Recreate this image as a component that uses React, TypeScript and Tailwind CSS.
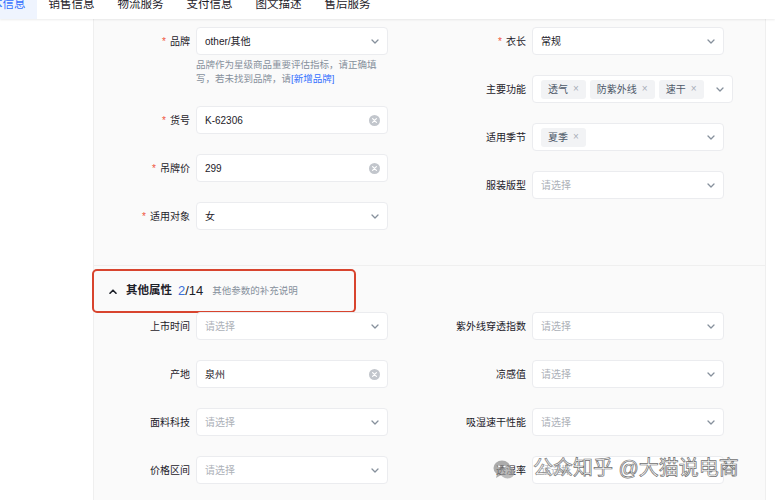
import type { ReactNode } from 'react';

const font = 'font-["Helvetica_Neue","Liberation_Sans","Noto_Sans_CJK_SC",sans-serif]';

function Chevron({ up = false }: { up?: boolean }) {
  if (up) {
    return (
      <svg width="8" height="5" viewBox="0 0 8 5" className="shrink-0">
        <path d="M1 4.2 L4 1.2 L7 4.2" fill="none" stroke="#1d2129" strokeWidth="1.6" strokeLinecap="round" strokeLinejoin="round" />
      </svg>
    );
  }
  return (
    <svg width="8" height="5" viewBox="0 0 8 5" className="shrink-0">
      <path d="M1 1 L4 4 L7 1" fill="none" stroke="#86909c" strokeWidth="1.3" strokeLinecap="round" strokeLinejoin="round" />
    </svg>
  );
}

function ClearIcon() {
  return (
    <svg width="11" height="11" viewBox="0 0 11 11" className="shrink-0">
      <circle cx="5.5" cy="5.5" r="5.5" fill="#c2c6cc" />
      <path d="M3.6 3.6 L7.4 7.4 M7.4 3.6 L3.6 7.4" stroke="#fff" strokeWidth="1.2" strokeLinecap="round" />
    </svg>
  );
}

function Tag({ text }: { text: string }) {
  return (
    <span className="flex h-[19px] items-center gap-[5px] rounded-[3px] bg-[#f2f3f5] px-[7px] text-[10px] text-[#4e5969]">
      {text}
      <span className="text-[10px] leading-none text-[#a9aeb8]">×</span>
    </span>
  );
}

function Field({
  label,
  required = false,
  wide = false,
  children,
}: {
  label: string;
  required?: boolean;
  wide?: boolean;
  children: ReactNode;
}) {
  return (
    <div className="flex items-center">
      <div
        className={`${wide ? 'w-[144px]' : 'w-[102px]'} flex shrink-0 items-center justify-end gap-[4px] pr-[6px] text-[10px] text-[#1d2129]`}
      >
        {required && <span className="text-[10px] text-[#f0553c]">*</span>}
        {label}
      </div>
      {children}
    </div>
  );
}

function Select({ value, w = 'w-[192px]' }: { value?: string; w?: string }) {
  return (
    <div
      className={`${w} flex h-[28px] items-center justify-between rounded-[4px] border border-[#ebecef] bg-white pl-[8px] pr-[8px] text-[10px]`}
    >
      <span className={value ? 'text-[#1d2129]' : 'text-[#adb1b8]'}>{value ?? '请选择'}</span>
      <Chevron />
    </div>
  );
}

function Input({ value }: { value: string }) {
  return (
    <div className="flex h-[28px] w-[192px] items-center justify-between rounded-[4px] border border-[#ebecef] bg-white pl-[8px] pr-[7px] text-[10px] text-[#1d2129]">
      <span>{value}</span>
      <ClearIcon />
    </div>
  );
}

function TagSelect({ tags, w }: { tags: string[]; w: string }) {
  return (
    <div
      className={`${w} flex h-[28px] items-center rounded-[4px] border border-[#ebecef] bg-white pl-[8px] pr-[8px]`}
    >
      <div className="flex flex-1 items-center gap-[4px]">
        {tags.map((t) => (
          <Tag key={t} text={t} />
        ))}
      </div>
      <Chevron />
    </div>
  );
}

const tabs = ['基本信息', '销售信息', '物流服务', '支付信息', '图文描述', '售后服务'];

export default function App() {
  return (
    <div className={`relative h-[500px] w-[775px] overflow-hidden bg-white ${font}`}>
      {/* tab bar */}
      <div className="relative z-10 flex h-[19px] overflow-hidden bg-white shadow-[0_1px_2px_rgba(0,0,0,0.08)]">
        <div className="ml-[-32px] flex">
          {tabs.map((t, i) => (
            <div
              key={t}
              className={`flex h-[19px] items-start px-[11.5px] text-[11.5px] leading-[12px] ${
                i === 0 ? 'bg-[#eff4fe] text-[#3370ff]' : 'text-[#1d2129]'
              }`}
            >
              <span className="mt-[-2px]">{t}</span>
            </div>
          ))}
        </div>
      </div>

      <div className="flex">
        <div className="w-[93px] shrink-0" />
        <div className="h-[481px] w-[673px] border-x border-[#efefef] bg-[#fafafa]">
          {/* basic attributes */}
          <div className="flex h-[247px] border-b border-[#efefef]">
            <div className="flex flex-col gap-[20px] pt-[8px]">
              <div>
                <Field label="品牌" required>
                  <Select value="other/其他" />
                </Field>
                <div className="ml-[102px] mt-[3px] whitespace-nowrap text-[9.5px] leading-[14px] text-[#86909c]">
                  品牌作为星级商品重要评估指标，请正确填
                  <br />
                  写，若未找到品牌，请<span className="text-[#3370ff]">[新增品牌]</span>
                </div>
              </div>
              <Field label="货号" required>
                <Input value="K-62306" />
              </Field>
              <Field label="吊牌价" required>
                <Input value="299" />
              </Field>
              <Field label="适用对象" required>
                <Select value="女" />
              </Field>
            </div>
            <div className="flex flex-col gap-[20px] pt-[8px]">
              <Field label="衣长" required wide>
                <Select value="常规" />
              </Field>
              <Field label="主要功能" wide>
                <TagSelect tags={['透气', '防紫外线', '速干']} w="w-[201px]" />
              </Field>
              <Field label="适用季节" wide>
                <TagSelect tags={['夏季']} w="w-[192px]" />
              </Field>
              <Field label="服装版型" wide>
                <Select />
              </Field>
            </div>
          </div>

          {/* other attributes */}
          <div className="ml-[-2px] mt-[3px] flex h-[44px] w-[264px] items-center rounded-[5px] border-2 border-[#d8442e] pl-[15px]">
            <Chevron up />
            <span className="ml-[9px] text-[11.5px] font-semibold text-[#1d2129]">其他属性</span>
            <span className="ml-[6px] text-[13px] text-[#1d2129]">
              <span className="text-[#3b6fd8]">2</span>/14
            </span>
            <span className="ml-[9px] text-[9.5px] text-[#86909c]">其他参数的补充说明</span>
          </div>
          <div className="mt-[-1px] flex">
            <div className="flex flex-col gap-[20px]">
              <Field label="上市时间">
                <Select />
              </Field>
              <Field label="产地">
                <Input value="泉州" />
              </Field>
              <Field label="面料科技">
                <Select />
              </Field>
              <Field label="价格区间">
                <Select />
              </Field>
            </div>
            <div className="flex flex-col gap-[20px]">
              <Field label="紫外线穿透指数" wide>
                <Select />
              </Field>
              <Field label="凉感值" wide>
                <Select />
              </Field>
              <Field label="吸湿速干性能" wide>
                <Select />
              </Field>
              <Field label="透湿率" wide>
                <Select />
              </Field>
            </div>
          </div>
        </div>
      </div>

      {/* watermark */}
      <div className="pointer-events-none absolute left-[493px] top-[459px] flex items-center">
        <svg width="22" height="22" viewBox="0 0 22 22" className="opacity-70">
          <ellipse cx="9" cy="9" rx="8.5" ry="7.5" fill="#8a8a8a" />
          <path d="M4 15 L3 19 L8 16 Z" fill="#8a8a8a" />
          <ellipse cx="14.5" cy="13.5" rx="7" ry="6" fill="#a0a0a0" />
          <circle cx="6" cy="7.5" r="1.1" fill="#fff" />
          <circle cx="11.5" cy="7.5" r="1.1" fill="#fff" />
        </svg>
      </div>
      <div className="pointer-events-none absolute left-[533px] top-[456px] text-[20px] leading-[24px] text-white/80 [-webkit-text-stroke:0.7px_#808080]">
        公众
      </div>
      <div className="pointer-events-none absolute left-[573px] top-[456px] whitespace-nowrap text-[20px] leading-[24px] text-white/80 [-webkit-text-stroke:0.7px_#707070]">
        知乎 @大猫说电商
      </div>
    </div>
  );
}
